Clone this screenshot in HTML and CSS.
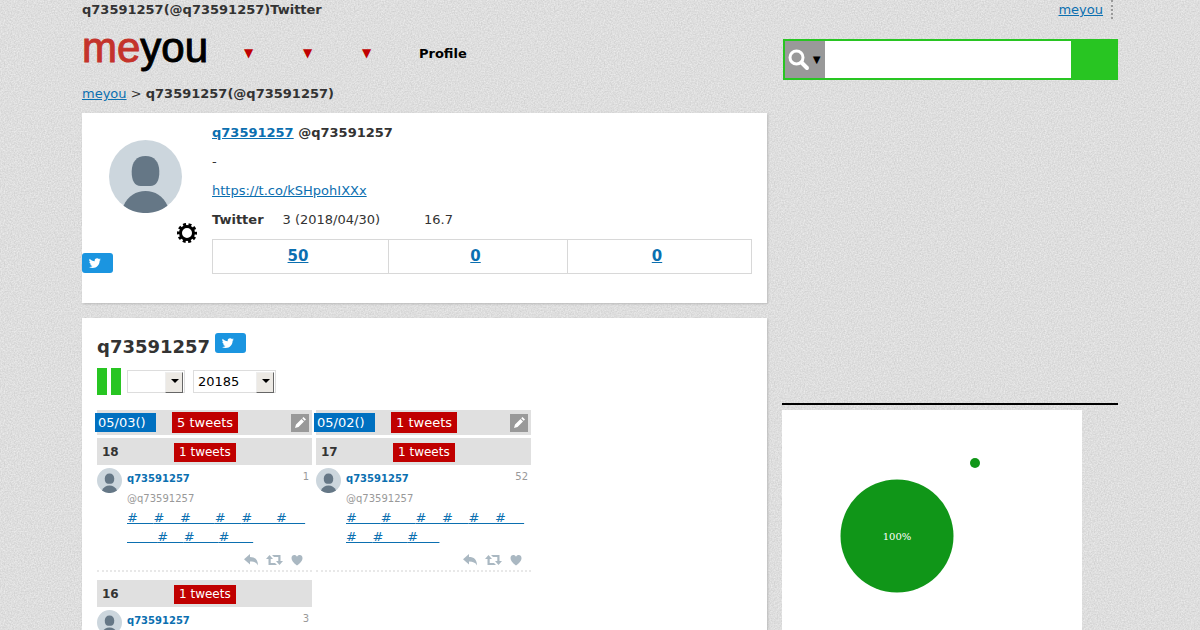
FILE: index.html
```html
<!DOCTYPE html>
<html lang="ja">

<head>
    <meta charset="utf-8">
    <title>q73591257(@q73591257)Twitter</title>
    <link rel="stylesheet" href="styles.css">
</head>

<body>
    <!-- shared icons -->
    <svg class="sprite" aria-hidden="true">
        <symbol id="bird" viewBox="0 0 24 24">
            <path d="M23.6 4.9c-.9.4-1.8.6-2.8.8 1-.6 1.8-1.6 2.2-2.7-1 .6-2 1-3.1 1.2A4.9 4.9 0 0 0 11.5 8.700C7.400 8.500 3.800 6.500 1.400 3.600a4.900 4.900 0 0 0 1.500 6.600c-.8 0-1.600-.2-2.200-.6v.1c0 2.400 1.700 4.400 3.900 4.800-.7.2-1.500.2-2.200.1.600 2 2.400 3.400 4.600 3.400A9.900 9.900 0 0 1-.300 20 13.900 13.900 0 0 0 7.200 22.200c9.100 0 14.300-7.700 14-14.600 1-.7 1.800-1.600 2.400-2.700z"/>
        </symbol>
        <symbol id="egg" viewBox="0 0 73 73">
            <circle cx="36.500" cy="36.500" r="36.500" fill="#ccd6dd"/>
            <path d="M36.500 16c9 0 13.500 6 13.800 15 .3 10-3.300 15-8.800 15h-10c-5.500 0-9.100-5-8.800-15 .3-9 4.800-15 13.800-15z" fill="#657786"/>
            <path d="M14.500 65.700C19 56 27 51 36.500 51S54 56 58.500 65.700a36.500 36.500 0 0 1-44 0z" fill="#657786"/>
        </symbol>
        <symbol id="pencil" viewBox="0 0 18 18">
            <path d="M4 14l1-3.500L10.500 5 13 7.500 7.500 13zM11.200 4.300L12.500 3 15 5.500l-1.300 1.300z"/>
        </symbol>
        <symbol id="reply" viewBox="0 0 14 12">
            <path d="M6 0v3c5 0 8 2.500 8 8.500C12.500 8.500 10 7.500 6 7.500v3L0 5.300z"/>
        </symbol>
        <symbol id="retweet" viewBox="0 0 17 12">
            <path d="M3.500 1L7 5H4.700v4H9l2 2H2.500V5H0zM6 1h8.500v6H17l-3.500 4L10 7h2.300V3H8z"/>
        </symbol>
        <symbol id="heart" viewBox="0 0 12 11">
            <path d="M6 11C2 8 .5 6 .5 3.500.5 1.500 1.800.5 3.200.5 4.500.5 5.500 1.200 6 2.200 6.500 1.200 7.500.5 8.800.5c1.400 0 2.700 1 2.700 3C11.500 6 10 8 6 11z"/>
        </symbol>
    </svg>

    <div class="wrap">
        <div class="topbar">
            <h1>q73591257(@q73591257)Twitter</h1>
            <p class="topbar-link"><a href="#">meyou</a></p>
        </div>

        <div class="header">
            <div class="logo"><span>me</span>you</div>
            <ul class="nav">
                <li><a class="arrow" href="#">▼</a></li>
                <li><a class="arrow" href="#">▼</a></li>
                <li><a class="arrow" href="#">▼</a></li>
                <li><a href="#">Profile</a></li>
            </ul>
            <form class="search" action="" method="get">
                <button type="button" class="search-type" aria-label="type">
                    <svg width="22" height="22" viewBox="0 0 22 22" fill="none" stroke="#fff"><circle cx="8.500" cy="8.500" r="6.500" stroke-width="3"/><path d="M13.500 13.500l5.500 5.500" stroke-width="4" stroke-linecap="round"/></svg>
                    <span>▼</span>
                </button>
                <input type="text" name="q" class="search-text" aria-label="search">
                <button type="submit" class="search-btn" aria-label="submit"></button>
            </form>
        </div>

        <p class="crumbs"><a href="#">meyou</a> &gt; <strong>q73591257(@q73591257)</strong></p>

        <div class="columns">
            <div class="main">
                <div class="box profile">
                    <div class="profile-side">
                        <svg class="profile-icon"><use href="#egg"/></svg>
                        <svg class="gear" viewBox="-10 -10 20 20">
                            <circle r="6.500" fill="none" stroke="#000" stroke-width="3"/>
                            <circle r="8.500" fill="none" stroke="#000" stroke-width="3" stroke-dasharray="2.900 2.441" stroke-dashoffset="1.450"/>
                        </svg>
                        <a class="tw-btn" href="#" aria-label="Twitter"><svg><use href="#bird"/></svg></a>
                    </div>
                    <div class="profile-body">
                        <p><strong><a href="#">q73591257</a> @q73591257</strong></p>
                        <p>-</p>
                        <p><a href="#">https://t.co/kSHpohIXXx</a></p>
                        <p class="since"><strong>Twitter</strong><span class="date">3 (2018/04/30)</span><span>16.7</span></p>
                        <ul class="counts">
                            <li><a href="#">50</a></li>
                            <li><a href="#">0</a></li>
                            <li><a href="#">0</a></li>
                        </ul>
                    </div>
                </div>

                <div class="box log">
                    <div class="log-head">
                        <h2>q73591257</h2>
                        <a class="tw-btn" href="#" aria-label="Twitter"><svg><use href="#bird"/></svg></a>
                    </div>
                    <form class="tools" action="" method="get">
                        <button type="button" class="bar-btn" aria-label="prev"></button>
                        <button type="button" class="bar-btn" aria-label="next"></button>
                        <span class="select kind"><select name="kind" aria-label="kind"><option></option></select></span>
                        <span class="select month"><select name="month" aria-label="month"><option>20185</option></select></span>
                    </form>

                    <div class="days">
                        <!-- 05/03 -->
                        <div class="day">
                            <div class="day-head">
                                <span class="day-date">05/03()</span>
                                <span class="num">5 tweets</span>
                                <button type="button" class="edit" aria-label="edit"><svg><use href="#pencil"/></svg></button>
                            </div>
                            <div class="hour"><strong>18</strong><span class="num">1 tweets</span></div>
                            <div class="tweet">
                                <svg class="tweet-icon"><use href="#egg"/></svg>
                                <div class="tweet-body">
                                    <div class="tweet-name"><a href="#">q73591257</a><span>1</span></div>
                                    <div class="tweet-id">@q73591257</div>
                                    <div class="tweet-text"><a href="#">#&emsp;&thinsp;</a><a href="#">#&emsp;&thinsp;</a><a href="#">#&emsp;&thinsp;&nbsp;&nbsp;</a><a href="#">#&emsp;&thinsp;</a><a href="#">#&emsp;&thinsp;&nbsp;&nbsp;</a><a href="#">#&emsp;&thinsp;&thinsp;<br>&emsp;&emsp;&nbsp;</a><a href="#">#&emsp;&thinsp;</a><a href="#">#&emsp;&thinsp;&nbsp;&nbsp;</a><a href="#">#&emsp;&thinsp;&nbsp;&nbsp;</a></div>
                                    <div class="actions">
                                        <svg width="14"><use href="#reply"/></svg>
                                        <svg width="17"><use href="#retweet"/></svg>
                                        <svg width="12"><use href="#heart"/></svg>
                                    </div>
                                </div>
                            </div>
                            <div class="hour"><strong>16</strong><span class="num">1 tweets</span></div>
                            <div class="tweet">
                                <svg class="tweet-icon"><use href="#egg"/></svg>
                                <div class="tweet-body">
                                    <div class="tweet-name"><a href="#">q73591257</a><span>3</span></div>
                                </div>
                            </div>
                        </div>

                        <!-- 05/02 -->
                        <div class="day">
                            <div class="day-head">
                                <span class="day-date">05/02()</span>
                                <span class="num">1 tweets</span>
                                <button type="button" class="edit" aria-label="edit"><svg><use href="#pencil"/></svg></button>
                            </div>
                            <div class="hour"><strong>17</strong><span class="num">1 tweets</span></div>
                            <div class="tweet">
                                <svg class="tweet-icon"><use href="#egg"/></svg>
                                <div class="tweet-body">
                                    <div class="tweet-name"><a href="#">q73591257</a><span>52</span></div>
                                    <div class="tweet-id">@q73591257</div>
                                    <div class="tweet-text"><a href="#">#&emsp;&thinsp;&nbsp;&nbsp;</a><a href="#">#&emsp;&thinsp;&nbsp;&nbsp;</a><a href="#">#&emsp;&thinsp;</a><a href="#">#&emsp;&thinsp;</a><a href="#">#&emsp;&thinsp;</a><a href="#">#&emsp;&thinsp;&thinsp;</a><br><a href="#">#&emsp;&thinsp;</a><a href="#">#&emsp;&thinsp;&nbsp;&nbsp;</a><a href="#">#&emsp;&nbsp;&nbsp;</a></div>
                                    <div class="actions">
                                        <svg width="14"><use href="#reply"/></svg>
                                        <svg width="17"><use href="#retweet"/></svg>
                                        <svg width="12"><use href="#heart"/></svg>
                                    </div>
                                </div>
                            </div>
                        </div>
                    </div>
                </div>
            </div>

            <div class="side">
                <div class="side-ad"></div>
                <div class="side-title"></div>
                <svg class="chart" width="300" height="250" viewBox="0 0 300 250">
                    <circle cx="115" cy="126" r="56.500"/>
                    <circle cx="193" cy="53" r="5"/>
                    <text x="115" y="130" text-anchor="middle">100%</text>
                </svg>
            </div>
        </div>
    </div>
</body>

</html>
```
FILE: styles.css
```css
* {
    box-sizing: border-box;
}

body {
    margin: 0;
    font-size: 13px;
    line-height: 19px;
    font-family: "DejaVu Sans", Verdana, "Noto Sans CJK JP", sans-serif;
    color: #333;
    background: #dedede url("data:image/svg+xml,%3Csvg xmlns='http://www.w3.org/2000/svg' width='200' height='200'%3E%3Cfilter id='n' x='0' y='0' width='100%25' height='100%25' color-interpolation-filters='sRGB'%3E%3CfeTurbulence type='fractalNoise' baseFrequency='.7' numOctaves='2' stitchTiles='stitch'/%3E%3CfeColorMatrix values='.16 0 0 0 .79 .16 0 0 0 .79 .16 0 0 0 .79 0 0 0 0 1'/%3E%3C/filter%3E%3Crect width='200' height='200' filter='url(%23n)'/%3E%3C/svg%3E");
}

h1,
h2,
p,
ul {
    margin: 0;
    padding: 0;
}

ul {
    list-style: none;
}

a {
    color: #0b6fb0;
}

button {
    padding: 0;
    border: 0;
    border-radius: 0;
    cursor: pointer;
}

svg {
    display: block;
}

.sprite {
    position: absolute;
    width: 0;
    height: 0;
}

.wrap {
    max-width: 1036px;
    margin: 0 auto;
}

/* header */
.topbar {
    display: flex;
    justify-content: space-between;
}

.topbar h1 {
    font-size: 13px;
}

.topbar-link {
    padding-right: 8px;
    margin-right: 5px;
    border-right: 2px dotted #999;
}

.header {
    display: flex;
    align-items: flex-start;
    padding-top: 20px;
}

.logo {
    width: 130px;
    height: 45px;
    line-height: 17px;
    font-family: "Liberation Sans", Arial, sans-serif;
    font-size: 42px;
    color: #000;
    -webkit-text-stroke: 1px currentColor;
}

.logo span {
    color: #c4332b;
}

.nav {
    display: flex;
    flex: 1;
    padding-top: 5px;
    padding-left: 7px;
    font-weight: bold;
}

.nav li {
    min-width: 59px;
    text-align: center;
}

.nav li:last-child {
    padding-left: 23px;
}

.nav a {
    color: #000;
    text-decoration: none;
}

.nav .arrow {
    display: block;
    font-size: 12px;
    font-weight: normal;
    color: #c00000;
}

.search {
    display: flex;
    width: 335px;
    height: 41px;
    border: 2px solid #28c522;
    background: #fff;
}

.search-type {
    display: flex;
    align-items: center;
    justify-content: flex-end;
    width: 40px;
    padding-right: 2px;
    background: #999;
    font-size: 13px;
    color: #000;
}

.search-text {
    flex: 1;
    min-width: 0;
    border: 0;
    padding: 0 5px;
    outline: 0;
}

.search-btn {
    width: 45px;
    background: #28c522;
}

.crumbs {
    padding: 0 0 10px;
}

/* columns */
.columns {
    display: flex;
    gap: 15px;
}

.main {
    flex: 1;
    min-width: 0;
}

.side {
    width: 336px;
}

.box {
    margin-bottom: 15px;
    background: #fff;
    box-shadow: 1px 1px 2px #bbb;
}

/* profile */
.profile {
    display: flex;
    padding: 10px 15px 29px 0;
}

.profile-side {
    width: 130px;
    padding-top: 17px;
}

.profile-icon {
    width: 73px;
    height: 73px;
    margin-left: 27px;
}

.gear {
    width: 20px;
    height: 20px;
    margin: 10px 0 10px 95px;
}

.tw-btn {
    display: block;
    width: 31px;
    height: 20px;
    padding: 4px 7px;
    border-radius: 3px;
    background: #1b95e0;
}

.tw-btn svg {
    width: 12px;
    height: 12px;
    fill: #fff;
}

.profile-body {
    flex: 1;
}

.profile-body p {
    margin-bottom: 10px;
}

.since .date {
    margin: 0 44px 0 19px;
}

.counts {
    display: grid;
    grid-template-columns: 175px 179px 1fr;
    border: 1px solid #d8d8d8;
    font-size: 15px;
    font-weight: bold;
    line-height: 33px;
    text-align: center;
}

.counts li {
    padding-right: 5px;
}

.counts li + li {
    border-left: 1px solid #d8d8d8;
}

/* tweet log */
.log {
    padding: 15px;
}

.log-head {
    display: flex;
    gap: 5px;
}

.log h2 {
    font-size: 18px;
    line-height: 27px;
}

.tools {
    display: flex;
    align-items: center;
    margin: 8px 0 15px;
}

.bar-btn {
    width: 10px;
    height: 27px;
    margin-right: 4px;
    background: #28c522;
}

.select {
    position: relative;
    height: 23px;
    margin: 0 6px 0 2px;
}

.select select {
    width: 100%;
    height: 23px;
    padding: 0 4px;
    border: 1px solid #ddd;
    border-radius: 0;
    background: #fff;
    font: inherit;
    color: #000;
    appearance: none;
}

.select::before {
    content: "";
    position: absolute;
    top: 2px;
    right: 2px;
    width: 16px;
    height: 19px;
    border: 1px solid;
    border-color: #eee #666 #666 #eee;
    background: #ece9e4;
    pointer-events: none;
}

.select::after {
    content: "";
    position: absolute;
    top: 9px;
    right: 6px;
    border: 4px solid transparent;
    border-top-color: #000;
    border-bottom: 0;
    pointer-events: none;
}

.kind {
    width: 58px;
}

.month {
    width: 83px;
}

.days {
    display: flex;
    gap: 4px;
}

.day {
    width: 215px;
}

.day-head,
.hour {
    display: flex;
    align-items: center;
    background: #e0e0e0;
}

.day-head {
    height: 25px;
    margin-bottom: 3px;
    padding-right: 3px;
}

.day-date {
    width: 61px;
    margin: 0 16px 0 -2px;
    padding: 0 3px;
    background: #0070c0;
    color: #fff;
}

.num {
    padding: 1px 5px;
    background: #c00000;
    color: #fff;
}

.edit {
    margin-left: auto;
    background: #999;
}

.edit svg {
    width: 18px;
    height: 18px;
    fill: #fff;
}

.hour {
    height: 27px;
    padding: 2px 5px 0;
    font-size: 12px;
}

.hour strong {
    width: 72px;
}

.hour .num {
    padding: 0 5px;
}

.tweet {
    display: flex;
    gap: 5px;
    margin-bottom: 8px;
    padding: 3px 3px 4px 0;
    border-bottom: 2px dotted #e8e8e8;
}

.tweet-icon {
    width: 25px;
    height: 25px;
}

.tweet-body {
    flex: 1;
    min-width: 0;
}

.tweet-name {
    display: flex;
    justify-content: space-between;
    line-height: 21px;
    font-size: 10px;
}

.tweet-name a {
    font-weight: bold;
    text-decoration: none;
}

.tweet-name span {
    line-height: 17px;
    color: #999;
}

.tweet-id {
    line-height: 19px;
    font-size: 10px;
    color: #999;
}

.tweet-text {
    white-space: nowrap;
}

.actions {
    display: flex;
    justify-content: flex-end;
    gap: 8px;
    padding: 8px 6px 0 0;
    fill: #aab8c2;
}

.actions svg {
    height: 12px;
}

/* side */
.side-ad {
    height: 290px;
}

.side-title {
    margin-bottom: 5px;
    border-top: 2px solid #000;
}

.chart {
    background: #fff;
    fill: #109618;
}

.chart text {
    font-family: "DejaVu Serif", serif;
    font-size: 10px;
    fill: #fff;
}
```
